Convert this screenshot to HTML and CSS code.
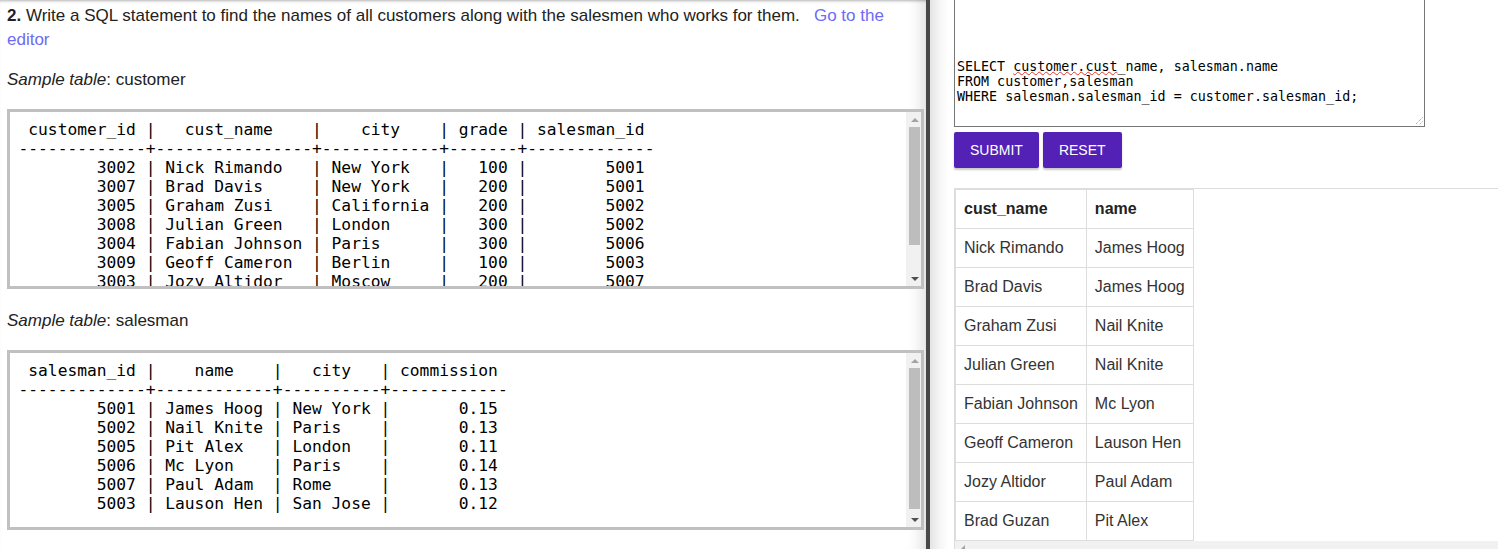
FILE: index.html
```html
<!DOCTYPE html>
<html lang="en">
<head>
<meta charset="utf-8">
<title>SQL exercise</title>
<link rel="stylesheet" href="styles.css">
</head>
<body>
<div class="app">
  <section class="pane-left">
    <p class="question"><strong>2.</strong> Write a SQL statement to find the names of all customers along with the salesmen who works for them. &nbsp; <a href="#" class="link">Go to the editor</a></p>
    <p class="caption"><em>Sample table</em>: customer</p>
    <div class="sample">
<pre class="sample-text"> customer_id |   cust_name    |    city    | grade | salesman_id 
-------------+----------------+------------+-------+-------------
        3002 | Nick Rimando   | New York   |   100 |        5001
        3007 | Brad Davis     | New York   |   200 |        5001
        3005 | Graham Zusi    | California |   200 |        5002
        3008 | Julian Green   | London     |   300 |        5002
        3004 | Fabian Johnson | Paris      |   300 |        5006
        3009 | Geoff Cameron  | Berlin     |   100 |        5003
        3003 | Jozy Altidor   | Moscow     |   200 |        5007
        3001 | Brad Guzan     | London     |       |        5005
</pre>
      <div class="vscroll" aria-hidden="true">
        <span class="sb-btn sb-up"></span>
        <span class="sb-track"><span class="sb-thumb" style="height:118px"></span></span>
        <span class="sb-btn sb-down"></span>
      </div>
    </div>
    <p class="caption"><em>Sample table</em>: salesman</p>
    <div class="sample">
<pre class="sample-text"> salesman_id |    name    |   city   | commission 
-------------+------------+----------+------------
        5001 | James Hoog | New York |       0.15
        5002 | Nail Knite | Paris    |       0.13
        5005 | Pit Alex   | London   |       0.11
        5006 | Mc Lyon    | Paris    |       0.14
        5007 | Paul Adam  | Rome     |       0.13
        5003 | Lauson Hen | San Jose |       0.12
</pre>
      <div class="vscroll" aria-hidden="true">
        <span class="sb-btn sb-up"></span>
        <span class="sb-track"><span class="sb-thumb" style="height:141px"></span></span>
        <span class="sb-btn sb-down"></span>
      </div>
    </div>
  </section>
  <div class="divider"></div>
  <section class="pane-right">
    <div class="editor" role="textbox" aria-multiline="true">SELECT <span class="misspelled">customer.cust</span>_name, salesman.name
FROM customer,salesman
WHERE salesman.salesman_id = customer.salesman_id;<svg class="grip" width="9" height="9" viewBox="0 0 9 9"><path d="M8.5 1.5 L1.5 8.5 M8.5 5.5 L5.5 8.5" stroke="#8a8a8a" stroke-width="1" stroke-dasharray="1 1" fill="none"/></svg></div>
    <div class="actions">
      <button class="btn" type="button">SUBMIT</button>
      <button class="btn" type="button">RESET</button>
    </div>
    <div class="result">
      <table>
        <thead>
          <tr><th>cust_name</th><th>name</th></tr>
        </thead>
        <tbody>
          <tr><td>Nick Rimando</td><td>James Hoog</td></tr>
          <tr><td>Brad Davis</td><td>James Hoog</td></tr>
          <tr><td>Graham Zusi</td><td>Nail Knite</td></tr>
          <tr><td>Julian Green</td><td>Nail Knite</td></tr>
          <tr><td>Fabian Johnson</td><td>Mc Lyon</td></tr>
          <tr><td>Geoff Cameron</td><td>Lauson Hen</td></tr>
          <tr><td>Jozy Altidor</td><td>Paul Adam</td></tr>
          <tr><td>Brad Guzan</td><td>Pit Alex</td></tr>
        </tbody>
      </table>
      <div class="hscroll" aria-hidden="true">
        <span class="sb-btn sb-left"></span>
      </div>
    </div>
  </section>
</div>
</body>
</html>
```

FILE: styles.css
```css
* { box-sizing: border-box; }

html, body {
  margin: 0;
  height: 100%;
}

body {
  font-family: "Liberation Sans", Arial, sans-serif;
  color: #222;
  background: #fff;
  overflow: hidden;
}

.app {
  display: flex;
  height: 549px;
}

.pane-left {
  width: 926px;
  flex: none;
  padding: 0 2px 0 7px;
  overflow: hidden;
  background: #fff;
  box-shadow: inset -18px 0 16px -14px rgba(0, 0, 0, 0.14),
              inset 0 3px 3px -2px rgba(0, 0, 0, 0.3);
}

.question {
  margin: 4px 0 16px;
  font-size: 17px;
  line-height: 24px;
  color: #222;
}

.link {
  color: #6d6af5;
  text-decoration: none;
}

.caption {
  margin: 0 0 17px;
  font-size: 17px;
  line-height: 24px;
  color: #222;
}

/* sample table box with its scrollbar */
.sample {
  display: flex;
  height: 180px;
  margin: 0 0 20px;
  border: 3px solid #c0c0c0;
  background: #fff;
}

.sample-text {
  flex: 1;
  min-width: 0;
  margin: 0;
  padding: 8px 10px 0 8.5px;
  overflow: hidden;
  font-family: "DejaVu Sans Mono", monospace;
  font-size: 16.25px;
  line-height: 19px;
  color: #000;
}

.vscroll {
  width: 15px;
  flex: none;
  display: flex;
  flex-direction: column;
  background: #f1f1f1;
}

.sb-btn {
  flex: none;
  width: 15px;
  height: 15px;
  display: flex;
  align-items: center;
  justify-content: center;
  padding-left: 2px;
}

.sb-btn::before {
  content: "";
  width: 0;
  height: 0;
  border: 4px solid transparent;
}

.sb-up::before {
  border-top-width: 0;
  border-bottom-color: #a3a3a3;
}

.sb-down::before {
  border-bottom-width: 0;
  border-top-color: #505050;
}

.sb-left {
  padding-left: 0;
}

.sb-left::before {
  border-left-width: 0;
  border-right-color: #a3a3a3;
}

.sb-track {
  flex: 1;
  display: flex;
  flex-direction: column;
}

.sb-thumb {
  display: block;
  margin: 0 1px 0 3px;
  background: #bdbdbd;
}

.divider {
  width: 4px;
  flex: none;
  background: #484846;
}

.pane-right {
  flex: 1;
  min-width: 0;
  padding-left: 24px;
  overflow: hidden;
  background: linear-gradient(to right, #e4e4e4 0, #f6f6f6 10px, #fff 18px);
}

.editor {
  position: relative;
  width: 471px;
  height: 128px;
  margin-top: -1px;
  border: 1px solid #767676;
  padding: 59px 2px 2px;
  font-family: "DejaVu Sans Mono", monospace;
  font-size: 13.33px;
  line-height: 15px;
  white-space: pre;
  color: #000;
  background: #fff;
}

.misspelled {
  text-decoration: underline wavy #e3342f;
  text-decoration-thickness: 1px;
  text-underline-offset: 0;
}

.grip {
  position: absolute;
  right: 1px;
  bottom: 1px;
}

.actions {
  display: flex;
  gap: 4px;
  margin-top: 5px;
}

.btn {
  height: 36px;
  padding: 0 16px;
  border: 0;
  border-radius: 2px;
  background: #5421b6;
  color: #fff;
  font-family: "Liberation Sans", Arial, sans-serif;
  font-size: 14px;
  box-shadow: 0 2px 2px rgba(0, 0, 0, 0.22);
}

.result {
  margin-top: 20px;
  margin-right: -20px;
  border: 1px solid #ddd;
  background: #fff;
}

.result table {
  border-collapse: collapse;
  border: 1px solid #ddd;
  font-size: 16px;
  color: #333;
}

.result th,
.result td {
  border: 1px solid #ddd;
  padding: 8px;
  line-height: 22px;
  text-align: left;
  white-space: nowrap;
}

.result th {
  font-weight: bold;
  color: #222;
}

.hscroll {
  display: flex;
  height: 15px;
  background: #f1f1f1;
}
```
